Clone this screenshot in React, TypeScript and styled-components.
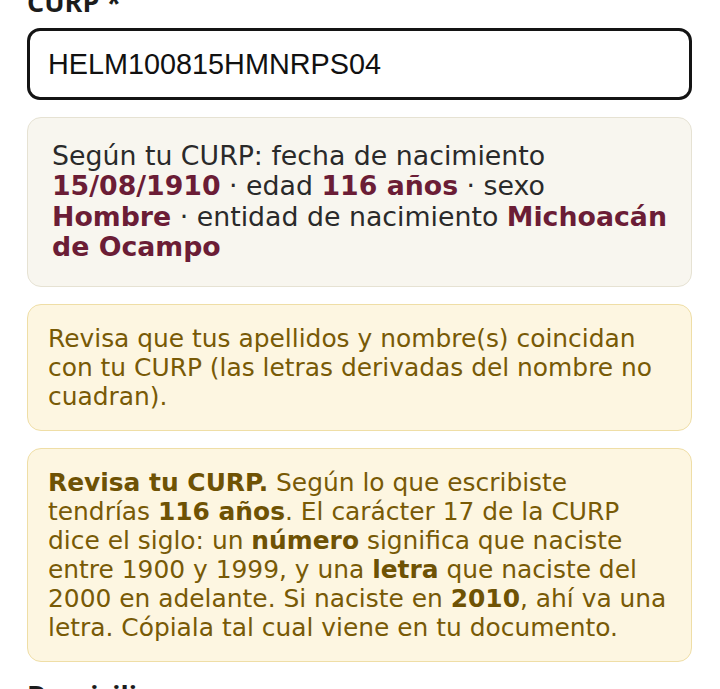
import styled, { createGlobalStyle } from 'styled-components';

const GlobalStyle = createGlobalStyle`
    html, body {
        margin: 0;
        padding: 0;
        background: #ffffff;
    }
    body {
        font-family: "DejaVu Sans", "Noto Sans", sans-serif;
        overflow: hidden;
    }
`;

const Form = styled.form`
    display: flex;
    flex-direction: column;
    gap: 17px;
    padding: 0 28px 0 27px;
    margin-top: -14px;
`;

const Field = styled.div`
    display: flex;
    flex-direction: column;
`;

const Label = styled.label`
    font-family: "Open Sans", "DejaVu Sans", sans-serif;
    font-weight: 700;
    font-size: 27px;
    line-height: 32px;
    color: #1c1c1c;
    margin-bottom: 10px;
`;

const Input = styled.input`
    box-sizing: border-box;
    width: 100%;
    height: 72px;
    padding: 0 18px;
    border: 3px solid #141414;
    border-radius: 13px;
    background: #fff;
    font-family: "Liberation Sans", Arial, sans-serif;
    font-size: 28.8px;
    color: #111;
    outline: none;
`;

const Notice = styled.div<{ tone?: 'info' | 'warn' }>`
    box-sizing: border-box;
    width: 100%;
    border-radius: 14px;
    ${props => props.tone === 'warn' ? `
        background: #fdf6e1;
        border: 1.5px solid #efdea6;
        color: #785a06;
        padding: 19px 22px 19px 20px;
        font-size: 24.9px;
        line-height: 29px;
        strong { color: #6e5204; }
    ` : `
        background: #f8f6ef;
        border: 1.5px solid #e6e2d3;
        color: #2a2a2a;
        padding: 23px 21px 23px 24px;
        font-size: 26.78px;
        line-height: 30.4px;
        strong { color: #6b1d36; }
    `}
    p { margin: 0; }
    strong { font-weight: 700; }
`;

const App = () => {
    const curp = 'HELM100815HMNRPS04';

    return (
        <>
            <GlobalStyle />
            <Form onSubmit={e => e.preventDefault()}>
                <Field>
                    <Label htmlFor="curp">CURP *</Label>
                    <Input id="curp" readOnly value={curp} />
                </Field>
                <Notice tone="info">
                    <p>
                        Según tu CURP: fecha de nacimiento <strong>15/08/1910</strong> · edad <strong>116 años</strong> · sexo <strong>Hombre</strong> · entidad de nacimiento <strong>Michoacán de Ocampo</strong>
                    </p>
                </Notice>
                <Notice tone="warn">
                    <p>Revisa que tus apellidos y nombre(s) coincidan con tu CURP (las letras derivadas del nombre no cuadran).</p>
                </Notice>
                <Notice tone="warn">
                    <p>
                        <strong>Revisa tu CURP.</strong> Según lo que escribiste tendrías <strong>116 años</strong>. El carácter 17 de la CURP dice el siglo: un <strong>número</strong> significa que naciste entre 1900 y 1999, y una <strong>letra</strong> que naciste del 2000 en adelante. Si naciste en <strong>2010</strong>, ahí va una letra. Cópiala tal cual viene en tu documento.
                    </p>
                </Notice>
                <Field>
                    <Label htmlFor="domicilio">Domicilio</Label>
                </Field>
            </Form>
        </>
    )
}

export default App
